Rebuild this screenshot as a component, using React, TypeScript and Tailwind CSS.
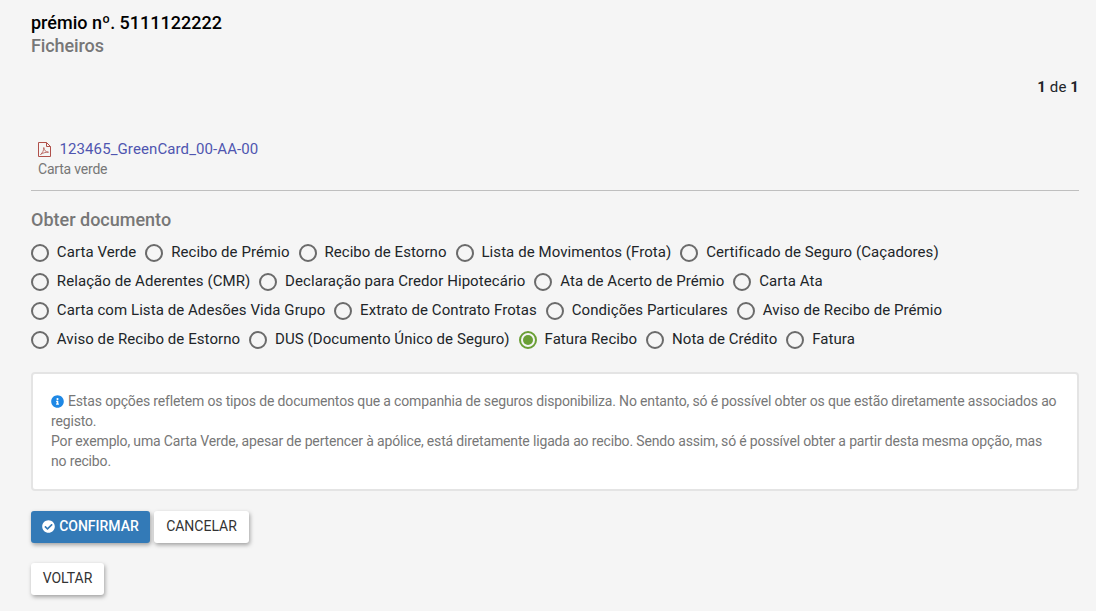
import React from "react";

const rows = [
  "Carta Verde", "Recibo de Prémio", "Recibo de Estorno", "Lista de Movimentos (Frota)", "Certificado de Seguro (Caçadores)",
  "Relação de Aderentes (CMR)", "Declaração para Credor Hipotecário", "Ata de Acerto de Prémio", "Carta Ata",
  "Carta com Lista de Adesões Vida Grupo", "Extrato de Contrato Frotas", "Condições Particulares", "Aviso de Recibo de Prémio",
  "Aviso de Recibo de Estorno", "DUS (Documento Único de Seguro)", "Fatura Recibo", "Nota de Crédito", "Fatura",
];

function Radio({ label }: { label: string }) {
  const on = label === "Fatura Recibo";
  return (
    <label className="flex items-center h-[29px] mr-[9px]">
      <span className={`w-[18px] h-[18px] rounded-full border-2 flex items-center justify-center ${on ? "border-[#6a9f35]" : "border-[#6b6b6b]"}`}>
        {on && <span className="w-[10px] h-[10px] rounded-full bg-[#6a9f35]" />}
      </span>
      <span className="ml-[7.85px] text-[15px] tracking-[0.07px] text-[#212529]">{label}</span>
    </label>
  );
}

export default function App() {
  return (
    <div className="min-h-[611px] bg-[#f5f5f5] px-[31px] pr-[17px] pt-[11px] font-['Roboto',sans-serif]">
      <h1 className="text-[18px] leading-[24px] font-medium text-black">prémio nº. 5111122222</h1>
      <h2 className="text-[18px] leading-[22px] tracking-[-0.1px] font-medium text-[#777777]">Ficheiros</h2>
      <div className="mt-[20px] text-right text-[15px] leading-[20px] tracking-[0.1px] text-[#212529]">
        <b className="font-bold">1</b> de <b className="font-bold">1</b>
      </div>
      <div className="mt-[42px] pl-[7px] pb-[11px] border-b border-[#bfbfbf]">
        <div className="flex items-center h-[20px]">
          <svg width="13" height="15" viewBox="0 0 13 15" fill="none" stroke="#b0504a" strokeWidth="1" className="mr-[8.5px]">
            <path d="M.5.5H8.5L12.5 4.5V14.5H.5Z" />
            <path d="M8.5.5V4.5H12.5" />
            <path d="M2.5 12.5C4.5 11 6 8 5.8 5.5C6 8 7.5 10 10.5 10.2C8 10 4.5 11 2.5 12.5Z" strokeWidth="0.8" />
          </svg>
          <a className="text-[15px] tracking-[0.1px] text-[#4f55b0]">123465_GreenCard_00-AA-00</a>
        </div>
        <div className="mt-[1px] text-[14px] leading-[19px] tracking-[-0.2px] text-[#777777]">Carta verde</div>
      </div>
      <h3 className="mt-[18px] text-[18px] leading-[22px] font-medium text-[#777777]">Obter documento</h3>
      <div className="mt-[7px] flex flex-wrap">
        {rows.map((r) => <Radio key={r} label={r} />)}
      </div>
      <div className="mt-[18px] h-[119px] rounded-[4px] border-2 border-[#e4e4e4] bg-white pl-[18px] pr-[14px] pt-[17px] text-[14px] leading-[20px] tracking-[-0.155px] text-[#777777]">
        <svg width="13" height="13" viewBox="0 0 512 512" fill="#1e88e5" className="inline mr-[4px] align-[-2px]">
          <path d="M256 8C119 8 8 119 8 256s111 248 248 248 248-111 248-248S393 8 256 8zm0 110a42 42 0 1 1 0 84 42 42 0 0 1 0-84zm56 254c0 7-5 12-12 12h-88c-7 0-12-5-12-12v-24c0-7 5-12 12-12h12v-64h-12c-7 0-12-5-12-12v-24c0-7 5-12 12-12h64c7 0 12 5 12 12v100h12c7 0 12 5 12 12z" />
        </svg>
        Estas opções refletem os tipos de documentos que a companhia de seguros disponibiliza. No entanto, só é possível obter os que estão diretamente associados ao registo.
        <br />
        Por exemplo, uma Carta Verde, apesar de pertencer à apólice, está diretamente ligada ao recibo. Sendo assim, só é possível obter a partir desta mesma opção, mas
        <br />
        no recibo.
      </div>
      <div className="mt-[20px] flex gap-[4px]">
        <button className="h-[32px] w-[119px] pb-[1px] rounded-[3px] bg-[#337ab7] text-white text-[14px] font-medium shadow-[1px_2px_4px_rgba(0,0,0,0.35)] flex items-center justify-center">
          <svg width="13" height="13" viewBox="0 0 512 512" fill="#fff" className="mr-[4px]">
            <path d="M504 256c0 137-111 248-248 248S8 393 8 256 119 8 256 8s248 111 248 248zM227 387l184-184c6-6 6-16 0-22l-23-23c-6-6-16-6-22 0L216 308l-70-70c-6-6-16-6-22 0l-23 23c-6 6-6 16 0 22l104 104c6 6 16 6 22 0z" />
          </svg>
          CONFIRMAR
        </button>
        <button className="h-[32px] w-[95px] pb-[1px] rounded-[3px] bg-white text-[#333333] text-[14px] shadow-[1px_2px_4px_rgba(0,0,0,0.35)]">CANCELAR</button>
      </div>
      <button className="mt-[20px] block h-[32px] w-[73px] pb-[1px] rounded-[3px] bg-white text-[#333333] text-[14px] shadow-[1px_2px_4px_rgba(0,0,0,0.35)]">VOLTAR</button>
    </div>
  );
}
